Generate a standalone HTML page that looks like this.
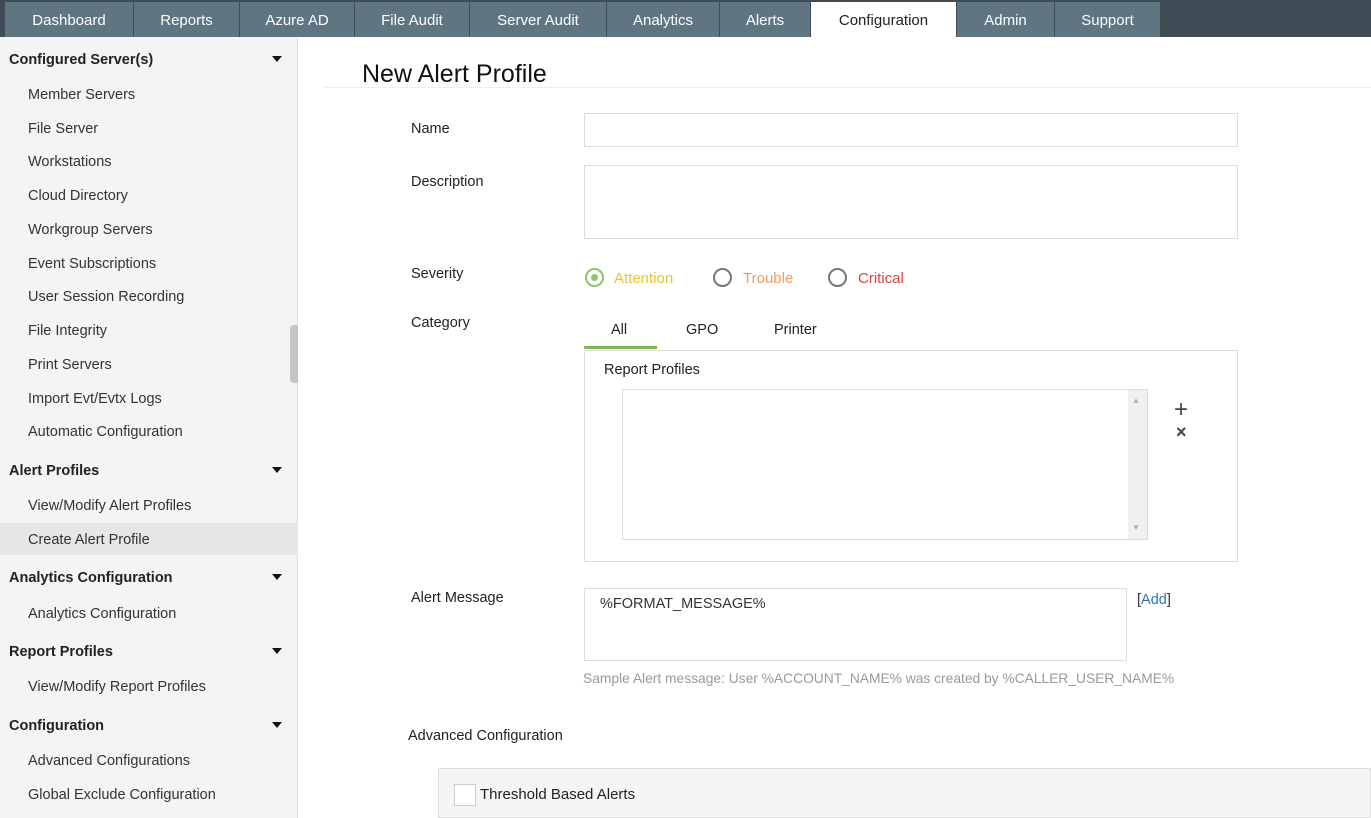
<!DOCTYPE html>
<html><head><meta charset="utf-8"><style>
*{box-sizing:border-box;margin:0;padding:0}
body{width:1371px;height:818px;overflow:hidden;background:#fff;font-family:"Liberation Sans",sans-serif;font-size:14.5px;color:#222;position:relative}
.a{position:absolute;white-space:nowrap;margin-top:2px}
#top{position:absolute;left:0;top:0;width:1371px;height:37px;background:#3f4b55}
.tab{position:absolute;top:2px;height:35px;background:#5f7582;color:#fff;font-size:15px;text-align:center;line-height:37px}
.tab.act{background:#fff;color:#222}
#side{position:absolute;left:0;top:37px;width:298px;height:781px;background:#f4f4f4;border-right:1px solid #e2e2e2}
.h{font-weight:bold;font-size:14.5px;left:9px;color:#222}
.i{left:28px;color:#333}
.arr{position:absolute;left:272px;width:0;height:0;border-left:5px solid transparent;border-right:5px solid transparent;border-top:6px solid #111;margin-top:-1px}
.box{position:absolute;border:1px solid #ddd;background:#fff}
.lbl{left:411px;color:#222}
.rad{position:absolute;width:19px;height:19px;border:2px solid #777;border-radius:50%}
</style></head><body>
<div id="top">
<div class="tab" style="left:5px;width:128px">Dashboard</div>
<div class="tab" style="left:134px;width:105px">Reports</div>
<div class="tab" style="left:240px;width:114px">Azure AD</div>
<div class="tab" style="left:355px;width:114px">File Audit</div>
<div class="tab" style="left:470px;width:136px">Server Audit</div>
<div class="tab" style="left:607px;width:112px">Analytics</div>
<div class="tab" style="left:720px;width:90px">Alerts</div>
<div class="tab act" style="left:811px;width:145px">Configuration</div>
<div class="tab" style="left:957px;width:97px">Admin</div>
<div class="tab" style="left:1055px;width:105px">Support</div>
</div>
<div id="side">
<div style="position:absolute;left:0;top:486px;width:298px;height:32px;background:#e6e6e6"></div>
<div style="position:absolute;left:290px;top:288px;width:8px;height:58px;background:#c4c4c4;border-radius:4px 0 0 4px"></div>
</div>
<div class="a h" style="top:50px">Configured Server(s)</div><div class="arr" style="top:57px"></div>
<div class="a i" style="top:85px">Member Servers</div>
<div class="a i" style="top:119px">File Server</div>
<div class="a i" style="top:152px">Workstations</div>
<div class="a i" style="top:186px">Cloud Directory</div>
<div class="a i" style="top:220px">Workgroup Servers</div>
<div class="a i" style="top:254px">Event Subscriptions</div>
<div class="a i" style="top:287px">User Session Recording</div>
<div class="a i" style="top:321px">File Integrity</div>
<div class="a i" style="top:355px">Print Servers</div>
<div class="a i" style="top:389px">Import Evt/Evtx Logs</div>
<div class="a i" style="top:422px">Automatic Configuration</div>
<div class="a h" style="top:461px">Alert Profiles</div><div class="arr" style="top:468px"></div>
<div class="a i" style="top:496px">View/Modify Alert Profiles</div>
<div class="a i" style="top:530px">Create Alert Profile</div>
<div class="a h" style="top:568px">Analytics Configuration</div><div class="arr" style="top:575px"></div>
<div class="a i" style="top:604px">Analytics Configuration</div>
<div class="a h" style="top:642px">Report Profiles</div><div class="arr" style="top:649px"></div>
<div class="a i" style="top:677px">View/Modify Report Profiles</div>
<div class="a h" style="top:716px">Configuration</div><div class="arr" style="top:723px"></div>
<div class="a i" style="top:751px">Advanced Configurations</div>
<div class="a i" style="top:785px">Global Exclude Configuration</div>

<div class="a" style="left:362px;top:58px;font-size:25px;color:#111">New Alert Profile</div>
<div style="position:absolute;left:324px;top:87px;width:1047px;height:1px;background:#eee"></div>

<div class="a lbl" style="top:119px">Name</div>
<div class="box" style="left:584px;top:113px;width:654px;height:34px"></div>
<div class="a lbl" style="top:172px">Description</div>
<div class="box" style="left:584px;top:165px;width:654px;height:74px"></div>
<div class="a lbl" style="top:264px">Severity</div>
<div class="rad" style="left:585px;top:268px;border-color:#8cc56b"><div style="position:absolute;left:4px;top:4px;width:7px;height:7px;border-radius:50%;background:#8cc56b"></div></div>
<div class="a" style="left:614px;top:268px;color:#f0c22a;font-size:15px">Attention</div>
<div class="rad" style="left:713px;top:268px"></div>
<div class="a" style="left:743px;top:268px;color:#f39a60;font-size:15px">Trouble</div>
<div class="rad" style="left:828px;top:268px"></div>
<div class="a" style="left:858px;top:268px;color:#e0433c;font-size:15px">Critical</div>
<div class="a lbl" style="top:313px">Category</div>
<div class="a" style="left:611px;top:320px">All</div>
<div class="a" style="left:686px;top:320px">GPO</div>
<div class="a" style="left:774px;top:320px">Printer</div>
<div class="box" style="left:584px;top:350px;width:654px;height:212px"></div>
<div style="position:absolute;left:584px;top:346px;width:73px;height:3px;background:#7cb84e"></div>
<div class="a" style="left:604px;top:360px">Report Profiles</div>
<div class="box" style="left:622px;top:389px;width:526px;height:151px"></div>
<div style="position:absolute;left:1128px;top:390px;width:19px;height:149px;background:#f0f0f0"></div>
<div class="a" style="left:1132px;top:394px;font-size:8px;color:#aaa">▲</div>
<div class="a" style="left:1132px;top:521px;font-size:8px;color:#aaa">▼</div>
<div class="a" style="left:1174px;top:395px;font-size:24px;color:#444;line-height:26px">+</div>
<div class="a" style="left:1176px;top:420px;font-size:18px;color:#444;font-weight:bold">×</div>
<div class="a lbl" style="top:588px">Alert Message</div>
<div class="box" style="left:584px;top:588px;width:543px;height:73px"></div>
<div class="a" style="left:600px;top:594px;color:#333">%FORMAT_MESSAGE%</div>
<div class="a" style="left:1137px;top:590px;color:#333">[<span style="color:#2a72c0">Add</span>]</div>
<div class="a" style="left:583px;top:669px;color:#999;font-size:13.8px">Sample Alert message: User %ACCOUNT_NAME% was created by %CALLER_USER_NAME%</div>
<div class="a" style="left:408px;top:726px">Advanced Configuration</div>
<div style="position:absolute;left:438px;top:768px;width:933px;height:50px;background:#f5f5f5;border:1px solid #e0e0e0"></div>
<div style="position:absolute;left:454px;top:784px;width:22px;height:22px;background:#fff;border:1px solid #ccc"></div>
<div class="a" style="left:480px;top:784px;font-size:15px">Threshold Based Alerts</div>
</body></html>
